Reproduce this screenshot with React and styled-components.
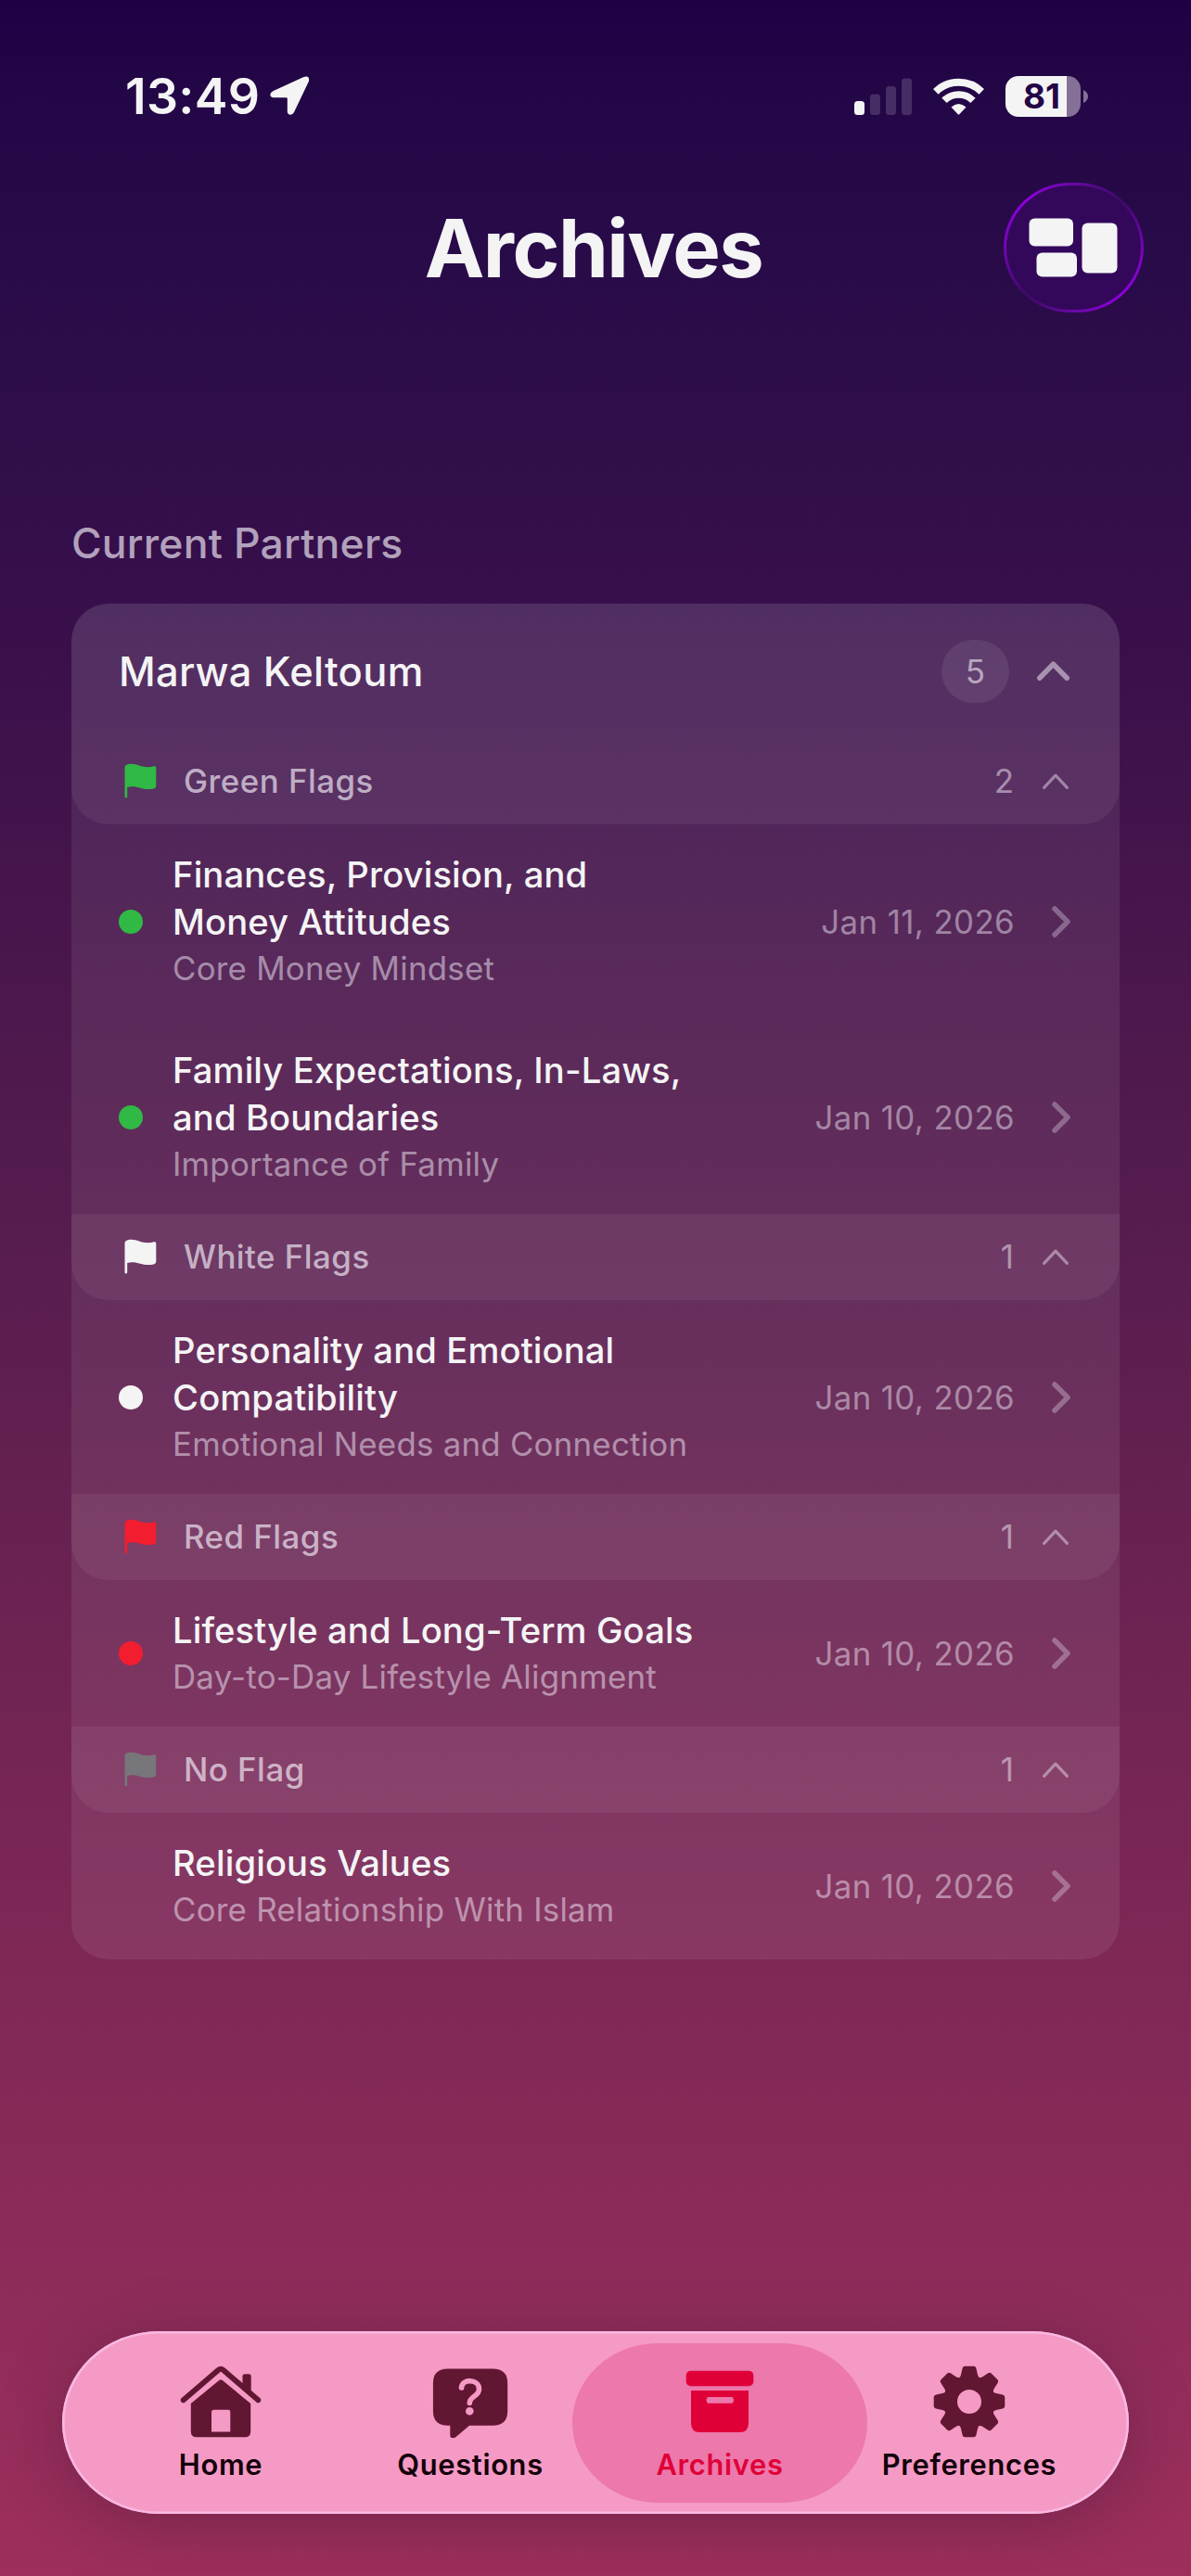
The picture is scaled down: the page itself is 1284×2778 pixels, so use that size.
import React from 'react';
import styled, { createGlobalStyle } from 'styled-components';

const GlobalStyle = createGlobalStyle`
  * {
    box-sizing: border-box;
  }

  body {
    margin: 0;
    font-family: Inter, 'Liberation Sans', sans-serif;
    color: #f4f4f5;
  }
`

const Screen = styled.div`
  display: flex;
  flex-direction: column;
  width: 1284px;
  height: 2778px;
  overflow: hidden;
  background: linear-gradient(
    180deg,
    #1f0045 0px,
    #230646 90px,
    #290b49 280px,
    #300e4a 480px,
    #380f4b 660px,
    #4a174c 1040px,
    #5e1f50 1480px,
    #752554 1900px,
    #8b2b59 2400px,
    #9e2f5c 2778px
  );
`

const StatusBar = styled.div`
  display: flex;
  align-items: center;
  justify-content: space-between;
  height: 142px;
  padding: 65px 111px 0 135px;
`

const StatusSide = styled.div`
  display: flex;
  align-items: center;
  gap: ${props => props.$gap};
`

const Clock = styled.span`
  font-size: 53.6px;
  font-weight: 600;
  letter-spacing: 0.3px;
`

const Battery = styled.div`
  display: flex;
  align-items: center;
  gap: 3px;
`

const BatteryBody = styled.div`
  display: flex;
  align-items: center;
  justify-content: center;
  width: 81px;
  height: 44px;
  padding-right: 3px;
  border-radius: 14px;
  background: linear-gradient(90deg, #f4f4f5 66px, #857097 66px);
  color: #230646;
  font-size: 37px;
  font-weight: 700;
`

const Header = styled.header`
  display: grid;
  grid-template-columns: 1fr auto 1fr;
  align-items: center;
  height: 140px;
  margin-top: 55px;
  padding: 0 51px 0 47px;
`

const Title = styled.h1`
  grid-column: 2;
  margin: 0;
  padding-top: 2px;
  font-size: 86.6px;
  line-height: 100px;
  font-weight: 700;
  letter-spacing: -1.5px;
`

const LayoutButton = styled.button`
  display: flex;
  align-items: center;
  justify-content: center;
  justify-self: end;
  width: 151px;
  height: 140px;
  padding: 0;
  border: 3px solid transparent;
  border-radius: 72px / 70px;
  background:
    linear-gradient(#33085a, #33085a) padding-box,
    conic-gradient(#6a08a6, #3c0a66 45deg, #7a04bd 95deg, #8f00dd 135deg, #6a08a6 180deg, #3c0a66 225deg, #7a04bd 275deg, #8f00dd 315deg, #6a08a6) border-box;
`

const SectionTitle = styled.h2`
  margin: 219px 0 35px 77px;
  font-size: 44.5px;
  line-height: 60px;
  font-weight: 550;
  letter-spacing: 0.2px;
  color: rgba(244, 238, 248, 0.66);
`

const Card = styled.section`
  width: 1130px;
  margin-left: 77px;
  border-radius: 40px;
  overflow: hidden;
  background: rgba(255, 255, 255, 0.08);
`

const PartnerBar = styled.div`
  display: flex;
  align-items: center;
  height: 145px;
  padding: 0 54px 0 51px;
  background: rgba(255, 255, 255, 0.06);
`

const PartnerName = styled.span`
  flex: 1;
  font-size: 43.5px;
  font-weight: 550;
  letter-spacing: 0.3px;
`

const CountBadge = styled.span`
  display: flex;
  align-items: center;
  justify-content: center;
  width: 73px;
  height: 68px;
  margin-right: 30px;
  border-radius: 34px;
  background: rgba(255, 255, 255, 0.08);
  font-size: 35px;
  color: rgba(244, 238, 248, 0.6);
`

const GroupBar = styled.div`
  display: flex;
  align-items: center;
  height: 93px;
  padding: 0 55px 1px 57px;
  border-radius: 0 0 40px 40px;
  background: rgba(255, 255, 255, 0.06);
`

const GroupName = styled.span`
  flex: 1;
  margin-left: 29px;
  font-size: 34.8px;
  font-weight: 500;
  letter-spacing: 0.5px;
  color: rgba(244, 238, 248, 0.68);
`

const GroupCount = styled.span`
  margin-right: 31px;
  font-size: 35px;
  color: rgba(244, 238, 248, 0.5);
`

const Entries = styled.div`
  display: flex;
  flex-direction: column;
  gap: 2px;
`

const Entry = styled.div`
  display: flex;
  align-items: center;
  padding: 29px 53px 29px 51px;
`

const Dot = styled.span`
  width: 26px;
  height: 26px;
  margin-right: 32px;
  border-radius: 50%;
  background: ${props => props.$color};
`

const EntryText = styled.div`
  flex: 1;
`

const EntryTitle = styled.div`
  font-size: 38.2px;
  line-height: 51px;
  font-weight: 500;
  letter-spacing: 0.12px;
  white-space: pre-line;
`

const EntryTopic = styled.div`
  font-size: 34.8px;
  line-height: 49px;
  letter-spacing: 0.26px;
  color: rgba(244, 238, 248, 0.52);
`

const EntryDate = styled.span`
  margin-right: 40px;
  font-size: 34.8px;
  letter-spacing: 0.4px;
  color: rgba(244, 238, 248, 0.48);
`

const TabBar = styled.nav`
  display: flex;
  width: 1150px;
  height: 197px;
  margin: auto 0 67px 67px;
  padding: 0 36px;
  border-radius: 104px / 98.5px;
  background: #f59ac4;
  box-shadow: inset 0 0 0 2.5px #f9b8e4, 0 12px 70px rgba(40, 20, 40, 0.3);
`

const Tab = styled.a`
  position: relative;
  display: flex;
  flex-direction: column;
  align-items: center;
  width: 269px;
  padding-top: 37px;
  color: ${props => (props.$active ? '#df0038' : '#611632')};

  &::before {
    content: '';
    position: absolute;
    inset: 13px -25px 12px -24px;
    border-radius: 92px / 86px;
    background: ${props => (props.$active ? '#ed78ab' : 'transparent')};
  }

  svg {
    position: relative;
  }
`

const TabLabel = styled.span`
  position: relative;
  margin-top: 9px;
  padding-left: 1px;
  font-size: 30.8px;
  line-height: 40px;
  font-weight: 600;
  letter-spacing: 0.7px;
  color: ${props => (props.$active ? '#df0038' : '#12000a')};
`

const GREEN = '#30b944';
const WHITE = '#f4f4f5';
const RED = '#f21d2f';
const GRAY = '#77767b';

const groups = [
  {
    name: 'Green Flags',
    color: GREEN,
    entries: [
      { title: 'Finances, Provision, and\nMoney Attitudes', topic: 'Core Money Mindset', date: 'Jan 11, 2026' },
      { title: 'Family Expectations, In-Laws,\nand Boundaries', topic: 'Importance of Family', date: 'Jan 10, 2026' },
    ],
  },
  {
    name: 'White Flags',
    color: WHITE,
    entries: [
      { title: 'Personality and Emotional\nCompatibility', topic: 'Emotional Needs and Connection', date: 'Jan 10, 2026' },
    ],
  },
  {
    name: 'Red Flags',
    color: RED,
    entries: [
      { title: 'Lifestyle and Long-Term Goals', topic: 'Day-to-Day Lifestyle Alignment', date: 'Jan 10, 2026' },
    ],
  },
  {
    name: 'No Flag',
    color: GRAY,
    noDot: true,
    entries: [
      { title: 'Religious Values', topic: 'Core Relationship With Islam', date: 'Jan 10, 2026' },
    ],
  },
];

function LocationIcon() {
  return (
    <svg width="43" height="43" viewBox="0 0 43 43" fill="#f4f4f5">
      <path d="M36.500 1 Q43 -1 42 5.500 L26 39 Q24.500 42.200 21.500 41.800 Q18.800 41.200 18.800 38 V24.500 Q18.800 23.200 17.500 23.200 L4 23.200 Q0.800 23.200 0.400 20.600 Q0 17.800 3.200 16.200 Z" />
    </svg>
  )
}

function SignalIcon() {
  return (
    <svg width="62" height="40" viewBox="0 0 62 40" fill="#f4f4f5">
      <rect x="0" y="25" width="11" height="15" rx="3.500" />
      <rect x="17" y="17.500" width="11" height="22.500" rx="3.500" opacity="0.17" />
      <rect x="34" y="9" width="11" height="31" rx="3.500" opacity="0.17" />
      <rect x="51" y="0.500" width="11" height="39.500" rx="3.500" opacity="0.17" />
    </svg>
  )
}

function WifiIcon() {
  return (
    <svg width="55" height="40" viewBox="0 0 55 40" fill="none" stroke="#f4f4f5">
      <path d="M2.800 14.800 A35.500 35.500 0 0 1 52.200 14.800" strokeWidth="8" />
      <path d="M12 24.300 A22 22 0 0 1 43 24.300" strokeWidth="7.500" />
      <path d="M19.500 31.500 Q27.500 24.500 35.500 31.500 L28.500 39 Q27.500 40 26.500 39 Z" fill="#f4f4f5" stroke="none" />
    </svg>
  )
}

function BlocksIcon() {
  return (
    <svg width="97" height="64" viewBox="0 0 97 64" fill="#f4f4f5">
      <rect x="0.500" y="0.500" width="47.500" height="30" rx="6" />
      <rect x="8.500" y="37.500" width="43.500" height="26" rx="6" />
      <rect x="57.500" y="5.500" width="38" height="54" rx="6" />
    </svg>
  )
}

function FlagIcon({ color }) {
  return (
    <svg width="35" height="38" viewBox="0 0 35 38" fill={color}>
      <path d="M0.500 5 Q0.500 1.800 4 1.200 C12 -0.600 18 4.800 26 4.300 C28.500 4.200 30.500 3.800 32 3.300 Q34.300 2.800 34.300 5.200 V24 Q34.300 26.700 31.500 27.400 C20 30.300 14 23 3.200 26 V36 Q3 37.500 1.800 37.500 Q0.500 37.500 0.500 36 Z" />
    </svg>
  )
}

function ChevronUp({ width, height, stroke, opacity }) {
  return (
    <svg width={width} height={height} viewBox={`0 0 ${width} ${height}`} fill="none">
      <polyline
        points={`${stroke / 2},${height - stroke / 2} ${width / 2},${stroke / 2 + 0.5} ${width - stroke / 2},${height - stroke / 2}`}
        stroke="#f4eef8"
        strokeOpacity={opacity}
        strokeWidth={stroke}
        strokeLinecap="round"
        strokeLinejoin="round"
      />
    </svg>
  )
}

function ChevronRight() {
  return (
    <svg width="20" height="34" viewBox="0 0 20 34" fill="none">
      <polyline
        points="3,3 17,17 3,31"
        stroke="#f4eef8"
        strokeOpacity="0.32"
        strokeWidth="5.500"
        strokeLinecap="round"
        strokeLinejoin="round"
      />
    </svg>
  )
}

function HomeIcon() {
  return (
    <svg width="88" height="78" viewBox="0 0 88 78" fill="currentColor">
      <path d="M3.700 37.300 L41.500 4.800 Q44 2.700 46.500 4.800 L84.300 37.300" fill="none" stroke="currentColor" strokeWidth="5.800" strokeLinecap="round" />
      <path d="M67.500 24 V11.500 Q67.500 9.300 69.700 9.300 H74.500 Q76.700 9.300 76.700 11.500 V31 Z" />
      <path fillRule="evenodd" d="M42.500 15.800 Q44 14.500 45.500 15.800 L76.200 41 V71 Q76.200 77.300 70 77.300 H18 Q11.800 77.300 11.800 71 V41 Z M36.500 47.700 Q34 47.700 34 50 V71.500 H54.300 V50 Q54.300 47.700 52 47.700 Z" />
    </svg>
  )
}

function QuestionIcon() {
  return (
    <svg width="82" height="78" viewBox="0 0 82 78" fill="currentColor">
      <path d="M17 3.500 H65 Q81.200 3.500 81.200 19 V49 Q81.200 64.700 65 64.700 H40 L25 77.500 Q19.300 80 19.300 75 V64.700 H17 Q0.900 64.700 0.900 49 V19 Q0.900 3.500 17 3.500 Z" />
      <path d="M31.500 24 C32 13.500 50.500 14.500 50.500 25.500 C50.500 33.500 40.300 33 40.300 40.500" fill="none" stroke="#f59ac4" strokeWidth="5.600" strokeLinecap="round" />
      <circle cx="40.300" cy="49.200" r="4.300" fill="#f59ac4" />
    </svg>
  )
}

function ArchiveIcon() {
  return (
    <svg width="74" height="78" viewBox="0 0 74 78" fill="currentColor">
      <rect x="0.700" y="5.700" width="72.600" height="16.500" rx="5" />
      <path fillRule="evenodd" d="M6 27 H68 V62 Q68 72 58.500 72 H15.500 Q6 72 6 62 Z M25 34 Q22.700 34 22.700 36.300 V38.500 Q22.700 40.800 25 40.800 H49.500 Q51.800 40.800 51.800 38.500 V36.300 Q51.800 34 49.500 34 Z" />
    </svg>
  )
}

function GearIcon() {
  return (
    <svg width="78" height="78" viewBox="-39 -39 78 78" fill="currentColor">
      <circle r="20.500" fill="none" stroke="currentColor" strokeWidth="15" />
      {[0, 45, 90, 135, 180, 225, 270, 315].map(angle => (
        <path
          key={angle}
          transform={`rotate(${angle})`}
          d="M-11.500 -25 Q-9.500 -26.500 -9 -29 L-7.400 -36 Q-6.800 -38.300 -4.800 -38.300 H4.800 Q6.800 -38.300 7.400 -36 L9 -29 Q9.500 -26.500 11.500 -25 Z"
        />
      ))}
    </svg>
  )
}

const tabs = [
  { label: 'Home', Icon: HomeIcon },
  { label: 'Questions', Icon: QuestionIcon },
  { label: 'Archives', Icon: ArchiveIcon, active: true },
  { label: 'Preferences', Icon: GearIcon },
];

function FlagGroup({ group }) {
  return (
    <div>
      <GroupBar>
        <FlagIcon color={group.color} />
        <GroupName>{group.name}</GroupName>
        <GroupCount>{group.entries.length}</GroupCount>
        <ChevronUp width={28} height={17} stroke={3.2} opacity={0.45} />
      </GroupBar>
      <Entries>
        {group.entries.map(entry => (
          <Entry key={entry.title}>
            <Dot $color={group.noDot ? 'transparent' : group.color} />
            <EntryText>
              <EntryTitle>{entry.title}</EntryTitle>
              <EntryTopic>{entry.topic}</EntryTopic>
            </EntryText>
            <EntryDate>{entry.date}</EntryDate>
            <ChevronRight />
          </Entry>
        ))}
      </Entries>
    </div>
  )
}

export default function App() {
  return (
    <Screen>
      <GlobalStyle />
      <StatusBar>
        <StatusSide $gap="11px">
          <Clock>13:49</Clock>
          <LocationIcon />
        </StatusSide>
        <StatusSide $gap="23px">
          <SignalIcon />
          <WifiIcon />
          <Battery>
            <BatteryBody>81</BatteryBody>
            <svg width="5" height="14" viewBox="0 0 5 14">
              <path d="M0 0 Q5 2.500 5 7 Q5 11.500 0 14 Z" fill="#857097" />
            </svg>
          </Battery>
        </StatusSide>
      </StatusBar>
      <Header>
        <Title>Archives</Title>
        <LayoutButton>
          <BlocksIcon />
        </LayoutButton>
      </Header>
      <SectionTitle>Current Partners</SectionTitle>
      <Card>
        <PartnerBar>
          <PartnerName>Marwa Keltoum</PartnerName>
          <CountBadge>5</CountBadge>
          <ChevronUp width={35} height={21} stroke={5.5} opacity={0.52} />
        </PartnerBar>
        {groups.map(group => (
          <FlagGroup key={group.name} group={group} />
        ))}
      </Card>
      <TabBar>
        {tabs.map(({ label, Icon, active }) => (
          <Tab key={label} $active={active}>
            <Icon />
            <TabLabel $active={active}>{label}</TabLabel>
          </Tab>
        ))}
      </TabBar>
    </Screen>
  )
}
